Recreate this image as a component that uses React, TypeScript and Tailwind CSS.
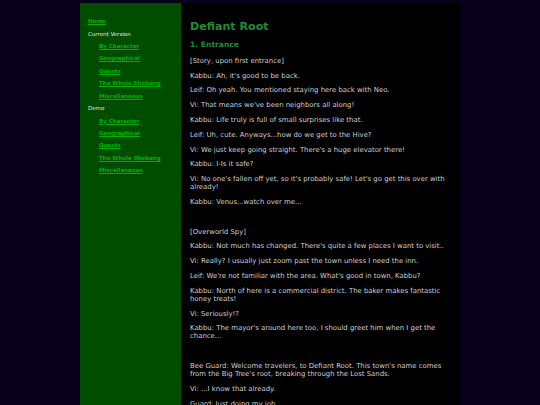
const font = { fontFamily: '"DejaVu Sans", Verdana, sans-serif' };

const navGroups = [
  {
    title: "Current Version",
    links: ["By Character", "Geographical", "Quests", "The Whole Shebang", "Miscellaneous"],
  },
  {
    title: "Demo",
    links: ["By Character", "Geographical", "Quests", "The Whole Shebang", "Miscellaneous"],
  },
];

const sections: string[][] = [
  [
    "[Story, upon first entrance]",
    "Kabbu: Ah, it's good to be back.",
    "Leif: Oh yeah. You mentioned staying here back with Neo.",
    "Vi: That means we've been neighbors all along!",
    "Kabbu: Life truly is full of small surprises like that.",
    "Leif: Uh, cute. Anyways...how do we get to the Hive?",
    "Vi: We just keep going straight. There's a huge elevator there!",
    "Kabbu: I-Is it safe?",
    "Vi: No one's fallen off yet, so it's probably safe! Let's go get this over with already!",
    "Kabbu: Venus...watch over me...",
  ],
  [
    "[Overworld Spy]",
    "Kabbu: Not much has changed. There's quite a few places I want to visit..",
    "Vi: Really? I usually just zoom past the town unless I need the inn.",
    "Leif: We're not familiar with the area. What's good in town, Kabbu?",
    "Kabbu: North of here is a commercial district. The baker makes fantastic honey treats!",
    "Vi: Seriously!?",
    "Kabbu: The mayor's around here too, I should greet him when I get the chance...",
  ],
  [
    "Bee Guard: Welcome travelers, to Defiant Root. This town's name comes from the Big Tree's root, breaking through the Lost Sands.",
    "Vi: ...I know that already.",
    "Guard: Just doing my job.",
    "Vi: Yeah, yeah.",
  ],
];

export default function App() {
  return (
    <div className="min-h-screen bg-[#08011a]" style={font}>
      <div className="mx-auto flex w-[380px] pt-[3px]">
        {/* Sidebar */}
        <aside className="w-[101px] shrink-0 bg-[#004d00] pl-[8px] pt-[14px] min-h-[402px]">
          <a href="#" className="block text-[5.5px] leading-[8px] font-bold text-[#00b000] underline">
            Home
          </a>
          {navGroups.map((group) => (
            <div key={group.title}>
              <p className="mt-[4.6px] text-[5.5px] leading-[8px] text-[#e8e8e8]">{group.title}</p>
              {group.links.map((link) => (
                <a
                  key={link}
                  href="#"
                  className="mt-[4.4px] ml-[11px] block text-[5.5px] leading-[8px] font-bold text-[#00b000] underline"
                >
                  {link}
                </a>
              ))}
            </div>
          ))}
        </aside>

        {/* Main */}
        <main className="flex-1 h-[402px] overflow-hidden bg-black pl-[9px] pr-[10px] pt-[17px] text-[6.9px] leading-[8px] text-[#cfcfcf]">
          <h1 className="text-[11.1px] leading-[13px] font-bold text-[#228b38]">Defiant Root</h1>
          <h2 className="mt-[7px] mb-[1.2px] text-[7.6px] leading-[10px] font-bold text-[#228b38]">1. Entrance</h2>
          {sections.map((lines, i) => (
            <div key={i}>
              {i > 0 && <p className="mt-[6.8px]">&nbsp;</p>}
              {lines.map((line, j) => (
                <p key={j} className="mt-[6.8px]">
                  {line}
                </p>
              ))}
            </div>
          ))}
        </main>
      </div>
    </div>
  );
}
